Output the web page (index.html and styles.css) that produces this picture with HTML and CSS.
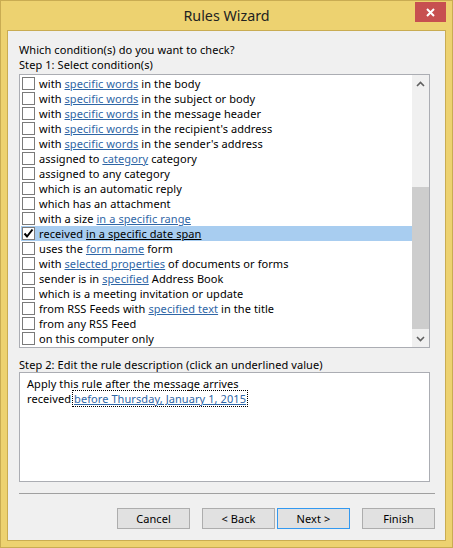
FILE: index.html
```html
<!DOCTYPE html>
<html lang="en">
<head>
    <meta charset="UTF-8">
    <title>Rules Wizard</title>
    <link rel="stylesheet" href="styles.css">
</head>
<body>
    <div class="window">
        <div class="titlebar">
            <span class="title">Rules Wizard</span>
            <button type="button" class="closeButton">
                <svg width="9" height="9" viewBox="0 0 9 9"><path d="M1 1 L8 8 M8 1 L1 8" stroke="#fff" stroke-width="2"/></svg>
            </button>
        </div>
        <div class="client">
            <p class="line">Which condition(s) do you want to check?</p>
            <p class="line">Step 1: Select condition(s)</p>
            <div class="listBox">
                <ul class="conditions">
                    <li class="condition"><span class="check"></span>with <a href="#">specific words</a> in the body</li>
                    <li class="condition"><span class="check"></span>with <a href="#">specific words</a> in the subject or body</li>
                    <li class="condition"><span class="check"></span>with <a href="#">specific words</a> in the message header</li>
                    <li class="condition"><span class="check"></span>with <a href="#">specific words</a> in the recipient's address</li>
                    <li class="condition"><span class="check"></span>with <a href="#">specific words</a> in the sender's address</li>
                    <li class="condition"><span class="check"></span>assigned to <a href="#">category</a> category</li>
                    <li class="condition"><span class="check"></span>assigned to any category</li>
                    <li class="condition"><span class="check"></span>which is an automatic reply</li>
                    <li class="condition"><span class="check"></span>which has an attachment</li>
                    <li class="condition"><span class="check"></span>with a size <a href="#">in a specific range</a></li>
                    <li class="condition selected"><span class="check"><svg width="11" height="11" viewBox="0 0 11 11"><path d="M1.5 5.5 L4 8.5 L9.5 1.5" stroke="#000" stroke-width="2" fill="none"/></svg></span>received <a href="#">in a specific date span</a></li>
                    <li class="condition"><span class="check"></span>uses the <a href="#">form name</a> form</li>
                    <li class="condition"><span class="check"></span>with <a href="#">selected properties</a> of documents or forms</li>
                    <li class="condition"><span class="check"></span>sender is in <a href="#">specified</a> Address Book</li>
                    <li class="condition"><span class="check"></span>which is a meeting invitation or update</li>
                    <li class="condition"><span class="check"></span>from RSS Feeds with <a href="#">specified text</a> in the title</li>
                    <li class="condition"><span class="check"></span>from any RSS Feed</li>
                    <li class="condition"><span class="check"></span>on this computer only</li>
                </ul>
                <div class="scrollbar">
                    <div class="arrow">
                        <svg width="9" height="6" viewBox="0 0 9 6"><path d="M1 5 L4.5 1.5 L8 5" stroke="#606060" stroke-width="1.6" fill="none"/></svg>
                    </div>
                    <div class="track"><div class="thumb"></div></div>
                    <div class="arrow">
                        <svg width="9" height="6" viewBox="0 0 9 6"><path d="M1 1 L4.5 4.5 L8 1" stroke="#606060" stroke-width="1.6" fill="none"/></svg>
                    </div>
                </div>
            </div>
            <p class="line step2">Step 2: Edit the rule description (click an underlined value)</p>
            <div class="description">
                <p class="line">Apply this rule after the message arrives</p>
                <p class="line">received<a href="#" class="focused">before Thursday, January 1, 2015</a></p>
            </div>
            <hr class="separator">
            <div class="buttons">
                <button type="button" class="button gapAfter">Cancel</button>
                <button type="button" class="button">&lt; Back</button>
                <button type="button" class="button default gapAfter">Next &gt;</button>
                <button type="button" class="button">Finish</button>
            </div>
        </div>
    </div>
</body>
</html>
```

FILE: styles.css
```css
* {
    margin: 0;
    padding: 0;
    box-sizing: border-box;
}
body {
    font-family: "Noto Sans", "Open Sans", sans-serif;
    font-size: 11px;
    letter-spacing: 0.08px;
    color: #000;
    background: #EDD270;
}
.window {
    width: 453px;
    height: 548px;
    border: 1px solid #C9AC52;
    background: #EDD270;
    padding: 0 6px 6px 6px;
    display: flex;
    flex-direction: column;
}
.titlebar {
    height: 29px;
    display: grid;
    grid-template-columns: 1fr auto 1fr;
}
.title {
    grid-column: 2;
    font-size: 14.3px;
    letter-spacing: 0;
    line-height: 30px;
    color: #222;
}
.closeButton {
    grid-column: 3;
    justify-self: end;
    width: 31px;
    height: 20px;
    margin-top: 1px;
    border: none;
    background: #C75050;
    display: flex;
    align-items: center;
    justify-content: center;
}
.client {
    flex: 1;
    border: 1px solid #C9AC52;
    background: #F0F0F0;
    padding: 11px 10px 0 11px;
}
.line {
    height: 15px;
    line-height: 15px;
    white-space: pre;
}
a {
    color: #2F66A6;
    text-decoration: underline;
}
.listBox {
    margin-top: 2px;
    width: 411px;
    height: 274px;
    border: 1px solid #ABADB3;
    background: #fff;
    display: flex;
}
.conditions {
    list-style: none;
    flex: 1;
    padding: 1px 0 1px 1px;
}
.condition {
    height: 15px;
    line-height: 15px;
    display: flex;
    align-items: center;
    padding-left: 1px;
    white-space: pre;
}
.condition.selected {
    background: #A8CDF0;
}
.condition.selected a {
    color: #000;
}
.check {
    width: 13px;
    height: 13px;
    border: 1px solid #7A7A7A;
    background: #fff;
    margin-right: 4px;
    flex: none;
    display: flex;
    align-items: center;
    justify-content: center;
}
.scrollbar {
    width: 17px;
    background: #F0F0F0;
    display: flex;
    flex-direction: column;
}
.arrow {
    height: 17px;
    display: flex;
    align-items: center;
    justify-content: center;
}
.track {
    flex: 1;
}
.thumb {
    margin-top: 95px;
    height: 142px;
    background: #CDCDCD;
}
.step2 {
    margin-top: 9px;
}
.description {
    width: 411px;
    height: 110px;
    border: 1px solid #ABADB3;
    background: #fff;
    padding: 3px 7px;
}
.focused {
    outline: 1px dotted #000;
    outline-offset: 0;
    margin-left: 2px;
    padding: 0 1px;
}
.separator {
    border: none;
    border-top: 1px solid #A0A0A0;
    margin-top: 11px;
}
.buttons {
    margin-top: 14px;
    display: flex;
    justify-content: flex-end;
}
.button {
    width: 73px;
    height: 21px;
    border: 1px solid #ADADAD;
    background: #E1E1E1;
    font-family: inherit;
    font-size: 11px;
    letter-spacing: 0.08px;
    color: #000;
}
.button.default {
    border-color: #3399F0;
}
.gapAfter {
    margin-right: 12px;
}
.buttons .button:nth-child(2) {
    margin-right: 2px;
}
```
